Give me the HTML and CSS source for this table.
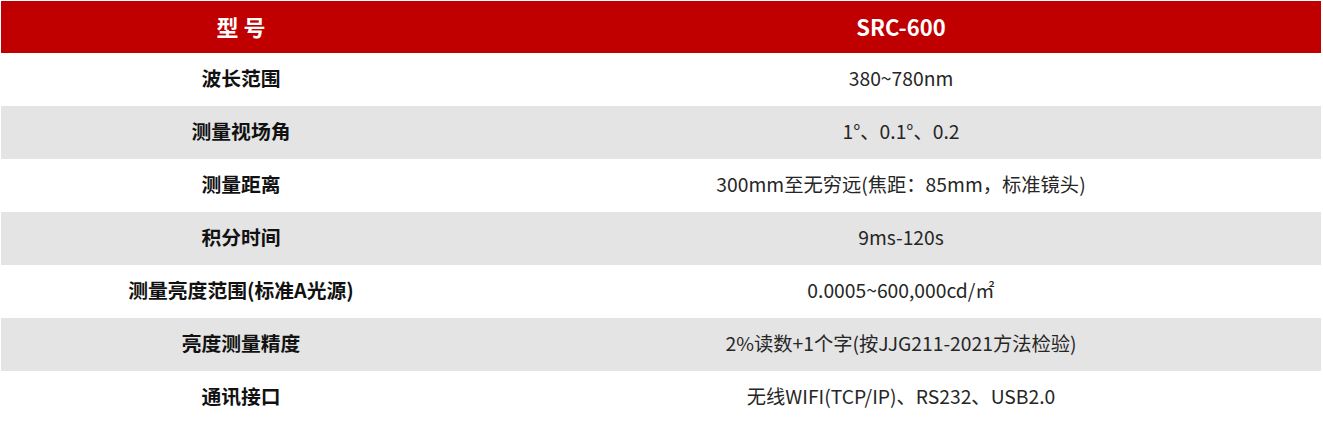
FILE: index.html
```html
<!DOCTYPE html>
<html lang="zh-CN">
<head>
<meta charset="utf-8">
<title>SRC-600</title>
<link rel="stylesheet" href="styles.css">
</head>
<body>
<table class="spec">
  <colgroup><col class="c1"><col class="c2"></colgroup>
  <thead>
    <tr class="head"><th>型&nbsp;号</th><th>SRC-600</th></tr>
  </thead>
  <tbody>
    <tr><td class="k">波长范围</td><td>380~780nm</td></tr>
    <tr class="alt"><td class="k">测量视场角</td><td>1°、0.1°、0.2</td></tr>
    <tr><td class="k">测量距离</td><td>300mm至无穷远(焦距：85mm，标准镜头)</td></tr>
    <tr class="alt"><td class="k">积分时间</td><td>9ms-120s</td></tr>
    <tr><td class="k">测量亮度范围(标准A光源)</td><td>0.0005~600,000cd/㎡</td></tr>
    <tr class="alt"><td class="k">亮度测量精度</td><td>2%读数+1个字(按JJG211-2021方法检验)</td></tr>
    <tr><td class="k">通讯接口</td><td>无线WIFI(TCP/IP)、RS232、USB2.0</td></tr>
  </tbody>
</table>
</body>
</html>
```
FILE: styles.css
```css
html, body {
  margin: 0;
  padding: 0;
  background: #ffffff;
}
body {
  padding: 1px 0 0 1px;
  font-family: "Noto Sans CJK SC", "Noto Sans", sans-serif;
  color: #262626;
}
.spec {
  width: 1320px;
  border-collapse: collapse;
  table-layout: fixed;
}
.c1 { width: 480px; }
.c2 { width: 840px; }
.spec th, .spec td {
  padding: 0 0 3px 0;
  text-align: center;
  vertical-align: middle;
  font-size: 19.3px;
  line-height: 24px;
  height: 50px;
}
.head th {
  background: #c00000;
  color: #ffffff;
  font-weight: 700;
  font-size: 22px;
  height: 49px;
  padding-bottom: 3px;
}
.spec td.k {
  font-weight: 700;
  font-size: 19.8px;
  color: #111111;
}
.alt td {
  background: #e4e4e4;
}
```
